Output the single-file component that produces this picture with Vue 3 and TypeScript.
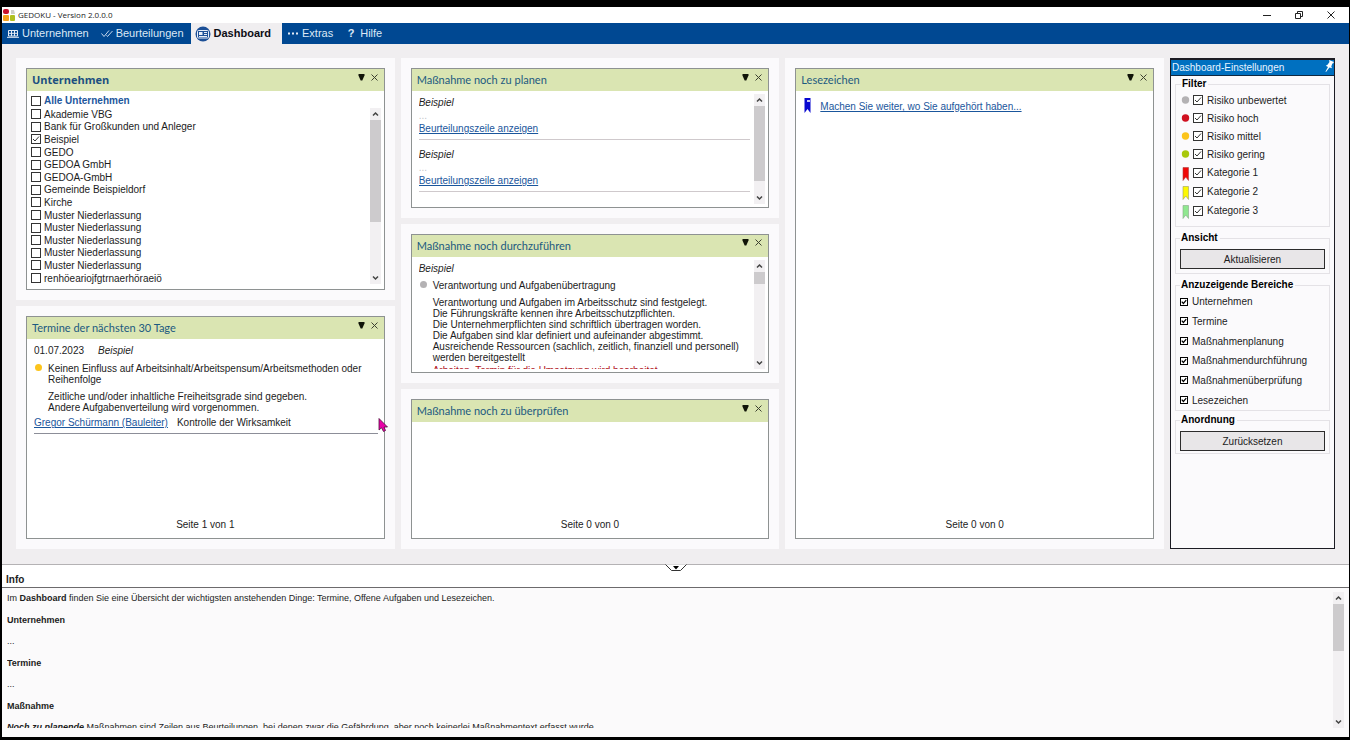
<script setup lang="ts">
import { ref } from 'vue'

type Kind = 'companies' | 'dates' | 'plan' | 'todo' | 'empty' | 'bookmarks'
interface Panel {
  kind: Kind
  title: string
  strong?: boolean
  scroll?: number
  page?: string
}
interface Option {
  label: string
  checked: boolean
}

const columns: Panel[][] = [
  [
    { kind: 'companies', title: 'Unternehmen', strong: true, scroll: 67 },
    { kind: 'dates', title: 'Termine der nächsten 30 Tage', page: 'Seite 1 von 1' },
  ],
  [
    { kind: 'plan', title: 'Maßnahme noch zu planen', scroll: 88 },
    { kind: 'todo', title: 'Maßnahme noch durchzuführen', scroll: 14 },
    { kind: 'empty', title: 'Maßnahme noch zu überprüfen', page: 'Seite 0 von 0' },
  ],
  [{ kind: 'bookmarks', title: 'Lesezeichen', page: 'Seite 0 von 0' }],
]

const all = ref(false)
const companies = ref<Option[]>(
  [
    'Akademie VBG',
    'Bank für Großkunden und Anleger',
    'Beispiel',
    'GEDO',
    'GEDOA GmbH',
    'GEDOA-GmbH',
    'Gemeinde Beispieldorf',
    'Kirche',
    'Muster Niederlassung',
    'Muster Niederlassung',
    'Muster Niederlassung',
    'Muster Niederlassung',
    'Muster Niederlassung',
    'renhöeariojfgtrnaerhöraeiö',
  ].map((label) => ({ label, checked: label === 'Beispiel' })),
)

const risks = ref([
  { label: 'Risiko unbewertet', color: '#b4b2b4', checked: true },
  { label: 'Risiko hoch', color: '#d01020', checked: true },
  { label: 'Risiko mittel', color: '#fcc41c', checked: true },
  { label: 'Risiko gering', color: '#a8c80c', checked: true },
])
const categories = ref([
  { label: 'Kategorie 1', color: '#f00808', edge: '#b04040', checked: true },
  { label: 'Kategorie 2', color: '#fcf800', edge: '#a0a060', checked: true },
  { label: 'Kategorie 3', color: '#90e890', edge: '#88a888', checked: true },
])
const areas = ref<Option[]>(
  ['Unternehmen', 'Termine', 'Maßnahmenplanung', 'Maßnahmendurchführung', 'Maßnahmenüberprüfung', 'Lesezeichen'].map(
    (label) => ({ label, checked: true }),
  ),
)
</script>

<template>
  <div class="window">
    <header class="titlebar">
      <svg class="logo" width="13" height="12" viewBox="0 0 13 12">
        <rect x="0" y="0" width="6" height="5" rx="2" fill="#c8102c" />
        <path d="M8 1h3l1 4H8z" fill="#cfcfc8" />
        <rect x="0" y="6" width="6" height="6" rx="1" fill="#f4a01c" />
        <rect x="7" y="6" width="5" height="6" rx="1" fill="#b0c020" />
      </svg>
      <span>GEDOKU - Version 2.0.0.0</span>
      <div class="winbtns">
        <button aria-label="Minimieren"><svg width="8" height="8" viewBox="0 0 8 8"><path d="M0 4.5h8" /></svg></button>
        <button aria-label="Wiederherstellen"><svg width="8" height="8" viewBox="0 0 8 8"><path d="M.5 2.5h5v5h-5zM2.5 2.500V.5h5v5h-2" /></svg></button>
        <button aria-label="Schließen"><svg width="8" height="8" viewBox="0 0 8 8"><path d="M.5.5l7 7M7.500.5l-7 7" /></svg></button>
      </div>
    </header>

    <nav class="menu">
      <a href="#">
        <svg width="12" height="8" viewBox="0 0 12 8" fill="none" stroke="#e4ecf6">
          <path d="M1.500.5H10.500V6H1.500zM1.500 3.300H10.500M4.500.5V6M7.500.5V6M0 7.300H12" />
        </svg>Unternehmen</a>
      <a href="#">
        <svg width="12" height="9" viewBox="0 0 12 9" fill="none" stroke="#c4d6ec">
          <path d="M.5 4.500L3 7.500L8 1.500M5.500 6.300L6.500 7.500L11.500 2" />
        </svg>Beurteilungen</a>
      <a href="#" class="active">
        <svg width="16" height="16" viewBox="0 0 16 16">
          <circle cx="8" cy="8" r="7.500" fill="#1c4f96" />
          <rect x="2.500" y="4.500" width="11" height="7.500" rx="1" fill="none" stroke="#e8eef8" />
          <rect x="4" y="6" width="3.500" height="3" fill="#e8eef8" />
          <path d="M9 6.500h3M9 8.500h3M4 10.500h8" stroke="#e8eef8" />
        </svg>Dashboard</a>
      <a href="#">
        <svg width="12" height="3" viewBox="0 0 12 3" fill="#e4ecf6">
          <rect x="1" y=".5" width="2" height="2" /><rect x="5" y=".5" width="2" height="2" /><rect x="9" y=".5" width="2" height="2" />
        </svg>Extras</a>
      <a href="#"><b class="q">?</b>Hilfe</a>
    </nav>

    <main class="board">
      <div v-for="(col, ci) in columns" :key="ci" class="col">
        <div v-for="p in col" :key="p.title" class="slot">
          <section class="panel">
            <header class="phead">
              <h2 :class="{ strong: p.strong }">{{ p.title }}</h2>
              <button aria-label="Menü"><svg width="7" height="7" viewBox="0 0 7 7"><path d="M.5 0H6.500V1.500L4.300 6.500H2.700L.5 1.500z" fill="#101408" /></svg></button>
              <button aria-label="Schließen"><svg width="7" height="7" viewBox="0 0 7 7"><path d="M.5.5l6 6M6.500.5l-6 6" stroke="#3c4030" fill="none" /></svg></button>
            </header>

            <label v-if="p.kind === 'companies'" class="allrow">
              <input v-model="all" type="checkbox" class="box" />Alle Unternehmen
            </label>

            <div class="pbody" :class="p.kind">
              <div class="content">
                <div v-if="p.kind === 'companies'" class="companylist">
                  <label v-for="(c, i) in companies" :key="i"><input v-model="c.checked" type="checkbox" class="box" />{{ c.label }}</label>
                </div>

                <article v-else-if="p.kind === 'dates'" class="entry">
                  <p class="when"><time>01.07.2023</time><i>Beispiel</i></p>
                  <div class="bullet amber">
                    <p>Keinen Einfluss auf Arbeitsinhalt/Arbeitspensum/Arbeitsmethoden oder Reihenfolge</p>
                    <p>Zeitliche und/oder inhaltliche Freiheitsgrade sind gegeben.<br />Andere Aufgabenverteilung wird vorgenommen.</p>
                  </div>
                  <p class="who"><a href="#">Gregor Schürmann (Bauleiter)</a><span>Kontrolle der Wirksamkeit</span></p>
                </article>

                <template v-else-if="p.kind === 'plan'">
                  <article v-for="n in 2" :key="n" class="planitem">
                    <p><i>Beispiel</i></p>
                    <p class="faint">...</p>
                    <p><a href="#">Beurteilungszeile anzeigen</a></p>
                  </article>
                </template>

                <article v-else-if="p.kind === 'todo'">
                  <p class="first"><i>Beispiel</i></p>
                  <div class="bullet gray">
                    <p>Verantwortung und Aufgabenübertragung</p>
                    <p>
                      Verantwortung und Aufgaben im Arbeitsschutz sind festgelegt.<br />
                      Die Führungskräfte kennen ihre Arbeitsschutzpflichten.<br />
                      Die Unternehmerpflichten sind schriftlich übertragen worden.<br />
                      Die Aufgaben sind klar definiert und aufeinander abgestimmt.<br />
                      Ausreichende Ressourcen (sachlich, zeitlich, finanziell und personell) werden bereitgestellt
                    </p>
                    <p class="late">Arbeiten, Termin für die Umsetzung wird bearbeitet</p>
                  </div>
                </article>

                <p v-else-if="p.kind === 'bookmarks'" class="mark">
                  <svg width="7" height="16" viewBox="0 0 7 16"><path d="M.5 0H6.500V15L3.500 11L.5 15z" fill="#0808d0" /><rect x="3" y="2" width="3" height="2" fill="#c8c8f4" /></svg>
                  <a href="#">Machen Sie weiter, wo Sie aufgehört haben...</a>
                </p>
              </div>

              <div v-if="p.scroll" class="scroll">
                <svg viewBox="0 0 11 12"><path d="M3 7.500L5.500 5L8 7.500" /></svg>
                <div class="track"><div class="thumb" :style="{ height: p.scroll + '%' }"></div></div>
                <svg viewBox="0 0 11 12"><path d="M3 4.500L5.500 7L8 4.500" /></svg>
              </div>
            </div>
            <footer v-if="p.page">{{ p.page }}</footer>
            <svg v-if="p.kind === 'dates'" class="cursor" width="10" height="14" viewBox="0 0 10 14">
              <path d="M1 .5V12L3.500 9.800L5.500 13.500L7.500 12.500L6 9H9.500z" fill="#e800a8" stroke="#50103c" stroke-width=".8" />
            </svg>
          </section>
        </div>
      </div>

      <aside class="settings">
        <header>
          Dashboard-Einstellungen
          <svg width="9" height="12" viewBox="0 0 9 12" fill="#fff"><path d="M4 0L9 2L8 3.500L7.300 3.500L6.300 6.500L7 8.300L4.500 7.500L1 12L.5 11.600L3 7L.8 5.800L2.500 4.800L4.500 2z" /></svg>
        </header>
        <fieldset class="filter">
          <legend>Filter</legend>
          <label v-for="r in risks" :key="r.label">
            <svg width="9" height="8" viewBox="0 0 9 8"><circle cx="4.500" cy="4" r="3.700" :fill="r.color" /></svg>
            <input v-model="r.checked" type="checkbox" class="box" />{{ r.label }}
          </label>
          <label v-for="k in categories" :key="k.label" class="cat">
            <svg width="9" height="16" viewBox="0 0 9 16"><path d="M2 2.500H7.500V15.500L4.800 12L2 15.500z" :fill="k.color" :stroke="k.edge" stroke-width=".6" /></svg>
            <input v-model="k.checked" type="checkbox" class="box" />{{ k.label }}
          </label>
        </fieldset>
        <fieldset>
          <legend>Ansicht</legend>
          <button>Aktualisieren</button>
        </fieldset>
        <fieldset class="areas">
          <legend>Anzuzeigende Bereiche</legend>
          <div class="arealist">
            <label v-for="a in areas" :key="a.label"><input v-model="a.checked" type="checkbox" class="box heavy" />{{ a.label }}</label>
          </div>
        </fieldset>
        <fieldset class="order">
          <legend>Anordnung</legend>
          <button>Zurücksetzen</button>
        </fieldset>
      </aside>
    </main>

    <section class="info">
      <button class="handle" aria-label="Info einklappen">
        <svg width="22" height="8" viewBox="0 0 22 8"><path d="M.5.5L6.500 6.500H15.500L21.500.5" fill="#fff" stroke="#333" /><path d="M8 2H14L11 5.500z" /></svg>
      </button>
      <h2>Info</h2>
      <div class="infobody">
        <div class="infotext">
          <p>Im <b>Dashboard</b> finden Sie eine Übersicht der wichtigsten anstehenden Dinge: Termine, Offene Aufgaben und Lesezeichen.</p>
          <h3>Unternehmen</h3>
          <p>...</p>
          <h3>Termine</h3>
          <p>...</p>
          <h3>Maßnahme</h3>
          <p><b><i>Noch zu planende</i></b> Maßnahmen sind Zeilen aus Beurteilungen, bei denen zwar die Gefährdung, aber noch keinerlei Maßnahmentext erfasst wurde.</p>
        </div>
        <div class="scroll">
          <svg viewBox="0 0 11 12"><path d="M3 7.500L5.500 5L8 7.500" /></svg>
          <div class="track"><div class="thumb" :style="{ height: '42%' }"></div></div>
          <svg viewBox="0 0 11 12"><path d="M3 4.500L5.500 7L8 4.500" /></svg>
        </div>
      </div>
    </section>
  </div>
</template>

<style>
body {
  margin: 0;
  background: #000;
}
</style>

<style scoped>
* {
  box-sizing: border-box;
}
.window {
  height: 100vh;
  display: grid;
  grid-template-rows: 16px 21px minmax(0, 3fr) minmax(0, 1fr);
  border: solid #000;
  border-width: 7px 1px 3px 2px;
  background: #f0eef0;
  color: #1c1c1c;
  font: 10px/13px 'Liberation Sans', Arial, sans-serif;
}
p,
h2,
h3 {
  margin: 0;
}
button {
  font: inherit;
  color: inherit;
  border: 0;
  padding: 0;
  background: none;
}
a {
  color: #1a569c;
}
svg {
  flex: none;
  display: block;
}

.titlebar {
  display: flex;
  align-items: center;
  gap: 2px;
  padding-left: 1px;
  background: #fff;
  font: 8px/16px 'Open Sans', 'Noto Sans', sans-serif;
}
.winbtns {
  margin-left: auto;
  display: flex;
  padding-right: 2px;
}
.winbtns button {
  width: 32px;
  height: 15px;
  display: grid;
  place-items: center;
}
.winbtns path {
  fill: none;
  stroke: #222;
}

.menu {
  display: flex;
  background: #004892;
  font-size: 11px;
}
.menu a {
  display: flex;
  align-items: center;
  gap: 3px;
  padding: 0 7px 0 5px;
  color: #dce8f6;
  text-decoration: none;
}
.menu .active {
  padding: 0 11px 0 4px;
  background: #f0eef0;
  color: #0c0c14;
  font-weight: bold;
}
.q {
  width: 12px;
  text-align: center;
}

.board {
  display: grid;
  grid-template-columns: repeat(3, minmax(0, 1fr)) 165px;
  gap: 6px;
  padding: 14px 14px 15px;
}
.col {
  min-height: 0;
  display: flex;
  flex-direction: column;
  gap: 6px;
}
.slot {
  flex: 1 1 0;
  min-height: 0;
  padding: 10px;
  background: #fbfafc;
}
.panel {
  position: relative;
  height: 100%;
  display: flex;
  flex-direction: column;
  border: 1px solid #8e9292;
  background: #fff;
}
.phead {
  flex: none;
  height: 22px;
  display: flex;
  gap: 6px;
  padding: 0 6px 0 5px;
  background: #dae5b2;
}
.phead h2 {
  flex: 1;
  color: #1c5a80;
  font: 11px/22px Lato, 'Open Sans', sans-serif;
}
.phead h2.strong {
  color: #1c4f80;
  font: bold 11px/22px 'Open Sans', 'Noto Sans', sans-serif;
}
.phead button {
  height: 16px;
}
.pbody {
  flex: 1;
  min-height: 0;
  display: flex;
  gap: 4px;
  padding: 3px 3px 3px 7px;
}
.content {
  flex: 1;
  min-width: 0;
  overflow: hidden;
}
.pbody.companies {
  padding: 1px 3px 5px 4px;
}
.allrow {
  flex: none;
  height: 16px;
  padding: 3px 0 0 4px;
  color: #1c569c;
  font-weight: bold;
}
.allrow,
.companylist label {
  display: flex;
  align-items: center;
  gap: 3px;
}
.companylist {
  height: 100%;
  display: grid;
  grid-template-rows: repeat(14, minmax(0, 1fr));
}
.box {
  appearance: none;
  flex: none;
  width: 10px;
  height: 10px;
  margin: 0;
  border: 1px solid #333;
  background: #fff;
}
.box:checked {
  background: #fff
    url("data:image/svg+xml,%3Csvg xmlns='http://www.w3.org/2000/svg' viewBox='0 0 8 8'%3E%3Cpath d='M1 4l2 2L7 1.500' fill='none' stroke='%23333'/%3E%3C/svg%3E");
}
.box.heavy {
  width: 8px;
  height: 8px;
  border-color: #000;
}
.box.heavy:checked {
  background: #fff
    url("data:image/svg+xml,%3Csvg xmlns='http://www.w3.org/2000/svg' viewBox='0 0 8 8'%3E%3Cpath d='M1 3.500l2.200 2.500L7 1.500' fill='none' stroke='%23000' stroke-width='1.600'/%3E%3C/svg%3E");
}

.scroll {
  flex: none;
  width: 11px;
  display: flex;
  flex-direction: column;
  background: #f2f0f2;
}
.scroll svg {
  width: 11px;
  height: 12px;
}
.scroll path {
  fill: none;
  stroke: #444;
  stroke-width: 1.5;
}
.track {
  flex: 1;
}
.thumb {
  background: #cdcbcd;
}

.entry {
  margin: 2px 0 0 -1px;
  padding: 0 1px 4px;
  border-bottom: 1px solid #8c8e98;
}
.pbody.dates {
  padding-right: 6px;
}
.when,
.who {
  display: flex;
}
.when {
  gap: 14px;
  margin-bottom: 6px;
}
.who {
  gap: 9px;
  margin-top: 3px;
}
.bullet {
  position: relative;
  padding-left: 14px;
  line-height: 11px;
}
.bullet::before {
  content: '';
  position: absolute;
  left: 1px;
  top: 1px;
  width: 7px;
  height: 7px;
  border-radius: 50%;
  background: #fcc41c;
}
.bullet.gray::before {
  background: #b4b2b4;
}
.bullet p + p {
  margin-top: 6px;
}
.planitem {
  height: 46px;
  margin-bottom: 6px;
  padding-top: 2px;
  border-bottom: 1px solid #cfc9cc;
}
.faint {
  color: #c4c4c8;
}
.first {
  padding: 2px 0 5px;
}
.bullet p.late {
  margin-top: 2px;
  color: #b01020;
}
.mark {
  display: flex;
  gap: 9px;
  padding: 4px 0 0 1px;
}
.mark a {
  padding-top: 2px;
}
.panel footer {
  padding-bottom: 7px;
  text-align: center;
}
.cursor {
  position: absolute;
  right: -4px;
  top: 101px;
}

.settings {
  border: 1px solid #1c1c24;
  border-top-width: 2px;
  background: #fbfafc;
}
.settings header {
  height: 16px;
  display: flex;
  justify-content: space-between;
  padding-left: 1px;
  border-bottom: 1px solid #102840;
  background: #0070c0;
  color: #e8f4ff;
  line-height: 16px;
}
.settings fieldset {
  min-width: 0;
  margin: 5px 4px 0;
  padding: 5px 4px 4px;
  border: 1px solid #e4e2e6;
}
.settings legend {
  height: 12px;
  padding: 0 2px 0 1px;
  color: #000;
  font-weight: bold;
  line-height: 12px;
}
.settings .filter {
  margin-top: 2px;
  padding: 1px 4px 6px 5px;
}
.settings label {
  display: flex;
  align-items: center;
  gap: 4px;
}
.filter label {
  height: 18px;
}
.filter svg {
  margin-right: -1px;
}
.filter .cat {
  height: 19px;
}
.settings .areas {
  padding: 1px 4px 0;
}
.arealist {
  height: 118px;
  display: grid;
  grid-auto-rows: 1fr;
}
.settings .order {
  margin-top: 3px;
  padding-bottom: 2px;
}
.settings button {
  width: 100%;
  height: 20px;
  border: 1px solid #2c2c2c;
  background: #e8e6e8;
}

.info {
  position: relative;
  display: flex;
  flex-direction: column;
  border-top: 1px solid #b4b2b4;
  background: #fbfafb;
  font-size: 9px;
  line-height: 11px;
}
.handle {
  position: absolute;
  left: 50%;
  top: -1px;
  transform: translateX(-50%);
}
.info h2 {
  flex: none;
  height: 23px;
  padding: 8px 4px 0;
  border-bottom: 1px solid #6c6a6c;
  background: #fff;
  font-size: 10px;
  line-height: 13px;
}
.infobody {
  flex: 1;
  min-height: 0;
  display: flex;
  padding: 4px 5px 9px;
}
.infotext {
  flex: 1;
  padding-top: 1px;
  overflow: hidden;
}
.infotext p {
  margin-bottom: 11px;
}
.infotext h3 {
  margin-bottom: 10px;
  font-size: 9px;
}
</style>
